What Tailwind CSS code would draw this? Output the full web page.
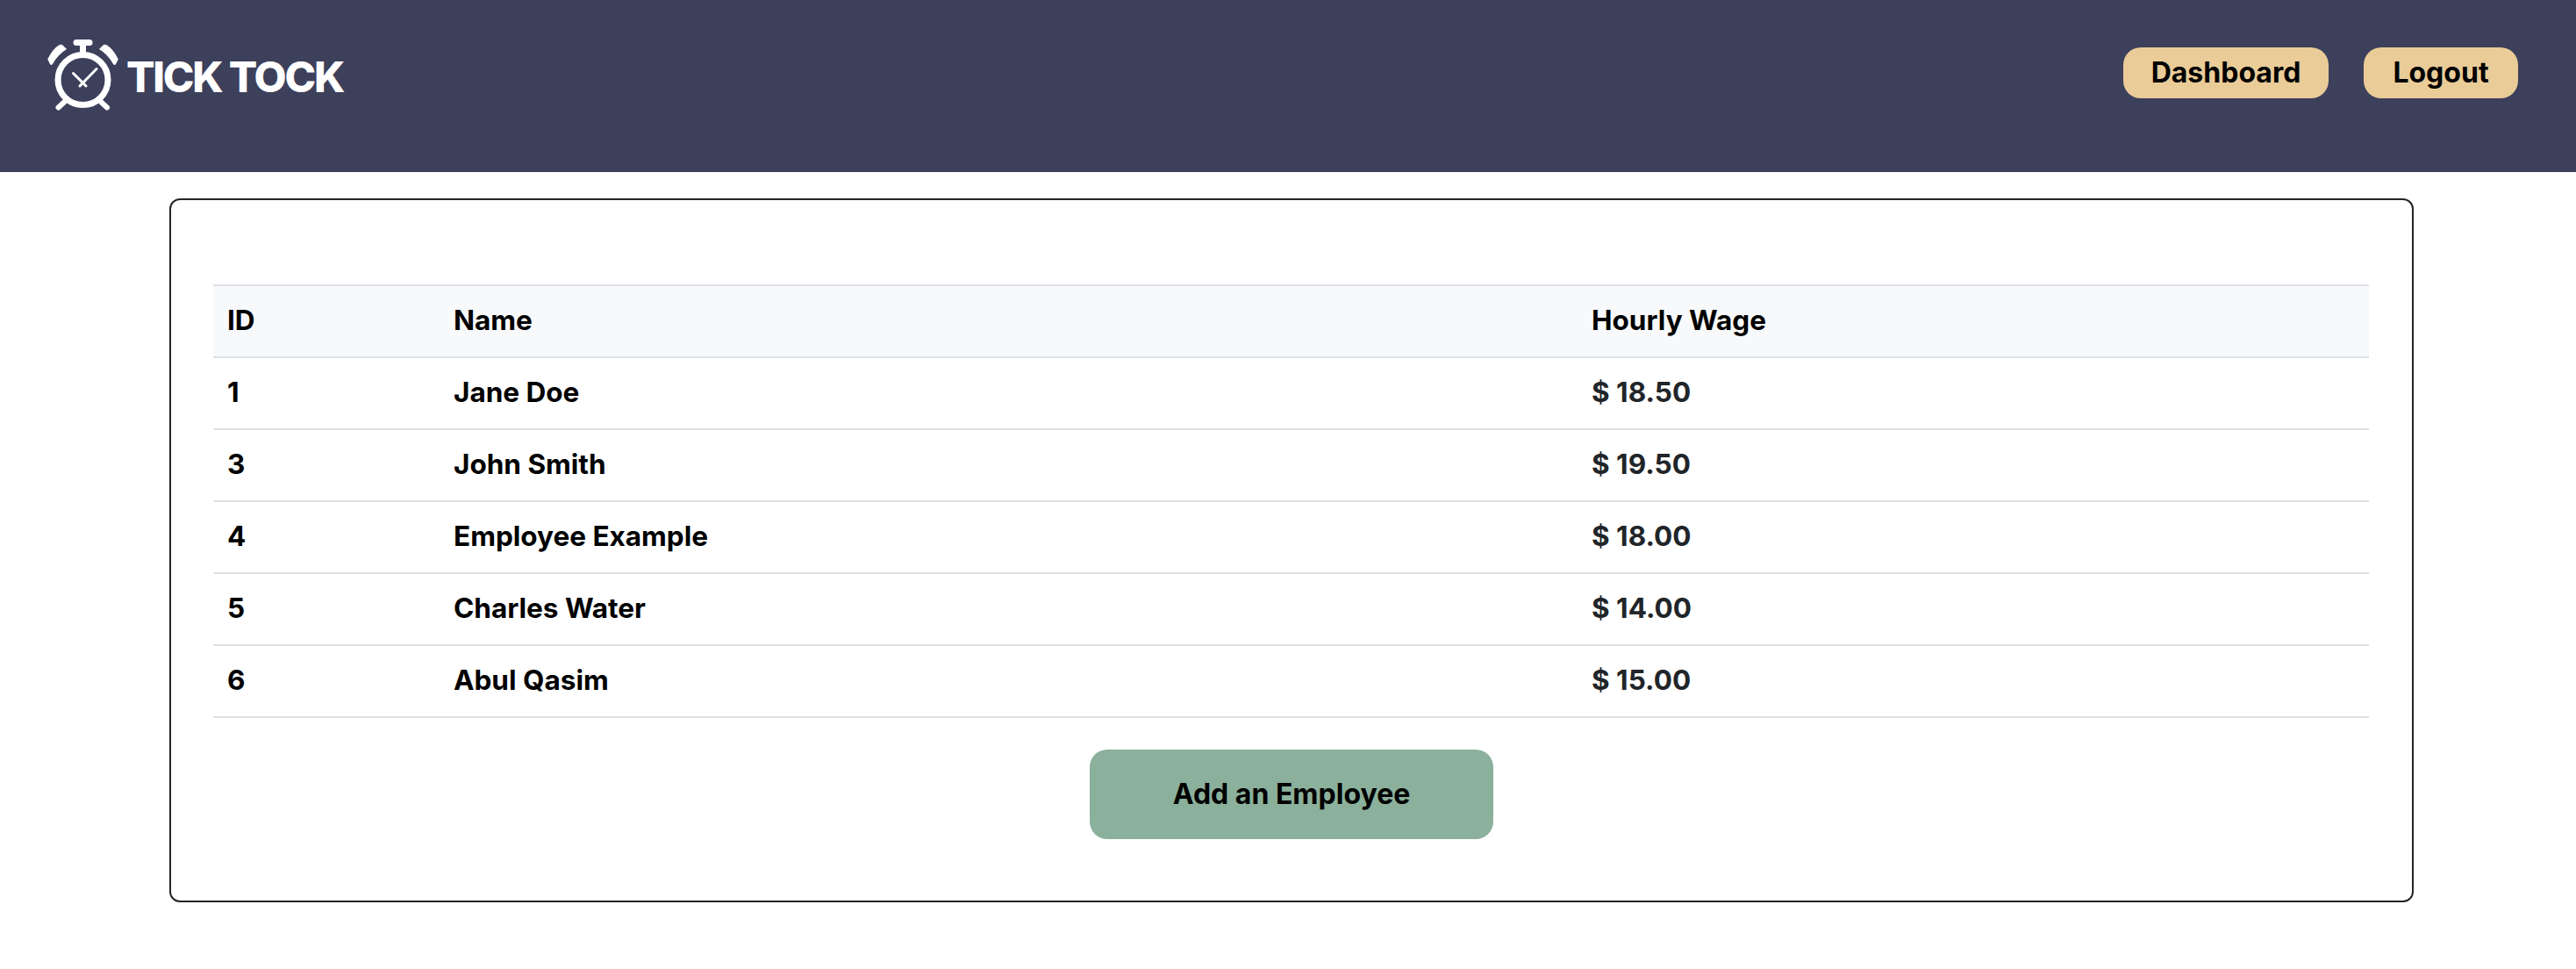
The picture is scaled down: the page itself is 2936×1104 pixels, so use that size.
<!DOCTYPE html>
<html lang="en">
<head>
    <meta charset="UTF-8">
    <title>Tick Tock</title>
    <script src="https://cdn.jsdelivr.net/npm/@tailwindcss/browser@4"></script>
</head>
<body class="bg-white font-['Inter',sans-serif] text-black">
    <header class="h-[196px] bg-[#3d405b] flex items-start justify-between pl-[54px] pr-[66px]">
        <a class="flex items-start mt-[45px]">
            <svg class="w-[81px] h-[82px]" viewBox="54 45 81 82" fill="none" stroke="#fff" stroke-linecap="round">
                <circle cx="94.5" cy="91" r="28.5" stroke-width="7"/>
                <path d="M87 48.5H102" stroke-width="7"/>
                <path d="M94.5 50V60" stroke-width="7"/>
                <path d="M55 66Q60 56 67 51.500Q70 50 72 52L76 56Q66 62 60 73Q58 75 57 73L54.500 68Q54 67 55 66Z" fill="#fff" stroke="none"/>
                <path d="M134 66Q129 56 122 51.500Q119 50 117 52L113 56Q123 62 129 73Q131 75 132 73L134.500 68Q135 67 134 66Z" fill="#fff" stroke="none"/>
                <path d="M66.500 122.500L73 116.500" stroke-width="6"/>
                <path d="M122 122.500L115.500 116.500" stroke-width="6"/>
                <path d="M91 98L110 78.500" stroke-width="3"/>
                <path d="M83.500 83.500L98 98" stroke-width="3"/>
            </svg>
            <span class="ml-[9px] mt-[18px] text-[48px] leading-[50px] font-extrabold tracking-[-2.2px] text-white">TICK TOCK</span>
        </a>
        <nav class="flex gap-[40px] mt-[54px]">
            <a class="w-[234px] h-[58px] flex items-center justify-center rounded-[20px] bg-[#eacc98] text-[32px] font-bold">Dashboard</a>
            <a class="w-[176px] h-[58px] flex items-center justify-center rounded-[20px] bg-[#eacc98] text-[32px] font-bold">Logout</a>
        </nav>
    </header>

    <main class="ml-[193px] mt-[30px] w-[2558px] h-[802px] border-2 border-[#212529] rounded-[12px] pt-[96px] px-[48px]">
        <table class="w-[2457px] table-fixed border-separate border-spacing-0 text-[31.500px] font-bold">
            <colgroup>
                <col class="w-[258px]">
                <col class="w-[1297px]">
                <col>
            </colgroup>
            <thead class="bg-[#f8f9fa] text-left">
                <tr class="h-[84px]">
                    <th class="pl-4 pb-[2px] border-y-2 border-[#dee2e6]">ID</th>
                    <th class="pl-4 pb-[2px] border-y-2 border-[#dee2e6]">Name</th>
                    <th class="pl-4 pb-[2px] border-y-2 border-[#dee2e6]">Hourly Wage</th>
                </tr>
            </thead>
            <tbody>
                <tr class="h-[82px]">
                    <td class="pl-4 pb-[2px] border-b-2 border-[#dee2e6]">1</td>
                    <td class="pl-4 pb-[2px] border-b-2 border-[#dee2e6]">Jane Doe</td>
                    <td class="pl-4 pb-[2px] border-b-2 border-[#dee2e6] text-[#212529]">$ 18.50</td>
                </tr>
                <tr class="h-[82px]">
                    <td class="pl-4 pb-[2px] border-b-2 border-[#dee2e6]">3</td>
                    <td class="pl-4 pb-[2px] border-b-2 border-[#dee2e6]">John Smith</td>
                    <td class="pl-4 pb-[2px] border-b-2 border-[#dee2e6] text-[#212529]">$ 19.50</td>
                </tr>
                <tr class="h-[82px]">
                    <td class="pl-4 pb-[2px] border-b-2 border-[#dee2e6]">4</td>
                    <td class="pl-4 pb-[2px] border-b-2 border-[#dee2e6]">Employee Example</td>
                    <td class="pl-4 pb-[2px] border-b-2 border-[#dee2e6] text-[#212529]">$ 18.00</td>
                </tr>
                <tr class="h-[82px]">
                    <td class="pl-4 pb-[2px] border-b-2 border-[#dee2e6]">5</td>
                    <td class="pl-4 pb-[2px] border-b-2 border-[#dee2e6]">Charles Water</td>
                    <td class="pl-4 pb-[2px] border-b-2 border-[#dee2e6] text-[#212529]">$ 14.00</td>
                </tr>
                <tr class="h-[82px]">
                    <td class="pl-4 pb-[2px] border-b-2 border-[#dee2e6]">6</td>
                    <td class="pl-4 pb-[2px] border-b-2 border-[#dee2e6]">Abul Qasim</td>
                    <td class="pl-4 pb-[2px] border-b-2 border-[#dee2e6] text-[#212529]">$ 15.00</td>
                </tr>
            </tbody>
        </table>
        <div class="flex justify-center mt-[36px]">
            <button class="w-[460px] h-[102px] rounded-[20px] bg-[#8bb09b] text-[32px] font-bold">Add an Employee</button>
        </div>
    </main>
</body>
</html>
